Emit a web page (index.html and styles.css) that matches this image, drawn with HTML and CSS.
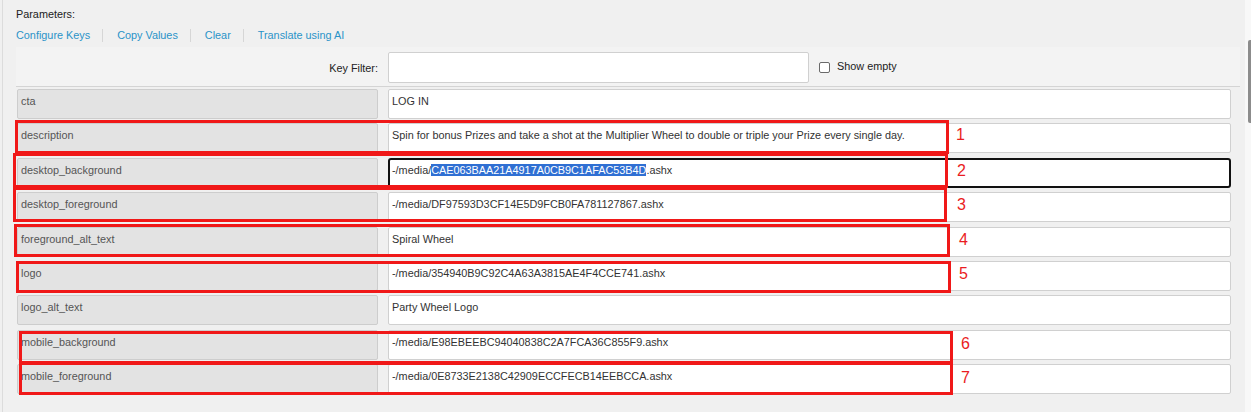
FILE: index.html
```html
<!DOCTYPE html>
<html lang="en">
<head>
    <meta charset="UTF-8">
    <title>Parameters</title>
    <link rel="stylesheet" href="styles.css">
</head>
<body>
    <div class="page">
        <div class="main">
            <div class="title">Parameters:</div>

            <!-- Toolbar links -->
            <div class="links">
                <a href="#">Configure Keys</a>
                <a href="#">Copy Values</a>
                <a href="#">Clear</a>
                <a href="#">Translate using AI</a>
            </div>

            <!-- Filter bar -->
            <div class="filter-bar">
                <label class="filter-label" for="keyFilter">Key Filter:</label>
                <input type="text" id="keyFilter" class="filter-input">
                <label class="show-empty">
                    <input type="checkbox" class="check">
                    <span>Show empty</span>
                </label>
            </div>

            <!-- Key / value rows -->
            <div class="rows">
                <div class="row"><div class="key">cta</div><div class="value">LOG IN</div></div>
                <div class="row"><div class="key">description</div><div class="value">Spin for bonus Prizes and take a shot at the Multiplier Wheel to double or triple your Prize every single day.</div></div>
                <div class="row"><div class="key">desktop_background</div><div class="value focused">-/media/<span class="selected">CAE063BAA21A4917A0CB9C1AFAC53B4D</span>.ashx</div></div>
                <div class="row"><div class="key">desktop_foreground</div><div class="value">-/media/DF97593D3CF14E5D9FCB0FA781127867.ashx</div></div>
                <div class="row"><div class="key">foreground_alt_text</div><div class="value">Spiral Wheel</div></div>
                <div class="row"><div class="key">logo</div><div class="value">-/media/354940B9C92C4A63A3815AE4F4CCE741.ashx</div></div>
                <div class="row"><div class="key">logo_alt_text</div><div class="value">Party Wheel Logo</div></div>
                <div class="row"><div class="key">mobile_background</div><div class="value">-/media/E98EBEEBC94040838C2A7FCA36C855F9.ashx</div></div>
                <div class="row"><div class="key">mobile_foreground</div><div class="value">-/media/0E8733E2138C42909ECCFECB14EEBCCA.ashx</div></div>
            </div>
        </div>

        <div class="scrollbar"><div class="thumb"></div></div>

        <!-- Red review marks drawn over the rows -->
        <div class="mark m1"></div>
        <div class="mark m2"></div>
        <div class="mark m3"></div>
        <div class="mark m4"></div>
        <div class="mark m5"></div>
        <div class="mark m6"></div>
        <div class="mark m7"></div>
        <span class="num n1">1</span>
        <span class="num n2">2</span>
        <span class="num n3">3</span>
        <span class="num n4">4</span>
        <span class="num n5">5</span>
        <span class="num n6">6</span>
        <span class="num n7">7</span>
    </div>
</body>
</html>
```

FILE: styles.css
```css
* {
    margin: 0;
    padding: 0;
    box-sizing: border-box;
}

body {
    font-family: "Liberation Sans", Arial, sans-serif;
    font-size: 10.85px;
    color: #222;
    background-color: #f0f0f0;
    overflow: hidden;
}

.page {
    position: relative;
    display: flex;
    height: 412px;
}

.main {
    flex: 1;
    margin-left: 2px;
    border-left: 1px solid #dcdcdc;
    padding: 8px 5px 0 13px;
}

.title {
    line-height: 13px;
    color: #222;
}

/* Toolbar links */
.links {
    display: flex;
    margin-top: 8px;
    line-height: 13px;
}

.links a {
    color: #2a93c8;
    text-decoration: none;
    margin-right: 12px;
    padding-left: 14px;
    border-left: 1px solid #d6d6d6;
}

.links a:first-child {
    padding-left: 0;
    border-left: none;
}

/* Filter bar */
.filter-bar {
    display: grid;
    grid-template-columns: 361px 421px auto;
    column-gap: 10px;
    align-items: center;
    margin-top: 5px;
    padding: 5px 0 3px 1px;
    background-color: #f3f3f3;
    border-bottom: 1px solid #d4d4d4;
}

.filter-label {
    text-align: right;
    color: #222;
}

.filter-input {
    height: 31px;
    border: 1px solid #d0d0d0;
    border-radius: 2px;
    background-color: #fff;
}

.show-empty {
    display: flex;
    align-items: flex-start;
    gap: 7px;
    color: #222;
    line-height: 13px;
    margin-top: -3px;
}

.check {
    appearance: none;
    width: 11px;
    height: 11px;
    margin-top: 2px;
    border: 1px solid #6a6a6a;
    border-radius: 2px;
    background-color: #fff;
}

/* Key / value rows */
.rows {
    display: flex;
    flex-direction: column;
    gap: 4.375px;
    padding: 2px 9px 0 1px;
}

.row {
    display: grid;
    grid-template-columns: 361px 1fr;
    column-gap: 10px;
    height: 30px;
}

.key {
    background-color: #e3e3e3;
    border: 1px solid #cdcdcd;
    border-radius: 2px;
    padding: 5px 3px;
    line-height: 13px;
    color: #555;
}

.value {
    background-color: #fff;
    border: 1px solid #d0d0d0;
    border-radius: 2px;
    padding: 5px 3px;
    line-height: 13px;
    color: #333;
    white-space: nowrap;
    overflow: hidden;
}

.value.focused {
    border: 2px solid #111;
    border-radius: 3px;
    padding: 4px 2px;
}

.selected {
    background-color: #2f6fd3;
    color: #fff;
}

/* Scrollbar */
.scrollbar {
    width: 6px;
    background-color: #f8f8f8;
}

.thumb {
    margin: 40px 0 0 2.5px;
    height: 83px;
    background-color: #8c8c8c;
    border-radius: 2px 0 0 2px;
}

/* Review marks */
.mark {
    position: absolute;
    border: 3px solid #f01818;
}

.m1 { left: 15px; top: 120px; width: 934px; height: 34px; }
.m2 { left: 13px; top: 153px; width: 935px; height: 35px; }
.m3 { left: 13px; top: 187px; width: 934px; height: 35px; }
.m4 { left: 14px; top: 224px; width: 936px; height: 33px; }
.m5 { left: 16px; top: 261px; width: 935px; height: 32px; }
.m6 { left: 19px; top: 331px; width: 934px; height: 33px; }
.m7 { left: 19px; top: 362px; width: 934px; height: 33px; }

.num {
    position: absolute;
    font-size: 16px;
    line-height: 16px;
    color: #ea1c22;
}

.n1 { left: 956px; top: 127px; }
.n2 { left: 957px; top: 163px; }
.n3 { left: 957px; top: 197px; }
.n4 { left: 959px; top: 232px; }
.n5 { left: 959px; top: 266px; }
.n6 { left: 961px; top: 336px; }
.n7 { left: 961px; top: 370px; }
```
